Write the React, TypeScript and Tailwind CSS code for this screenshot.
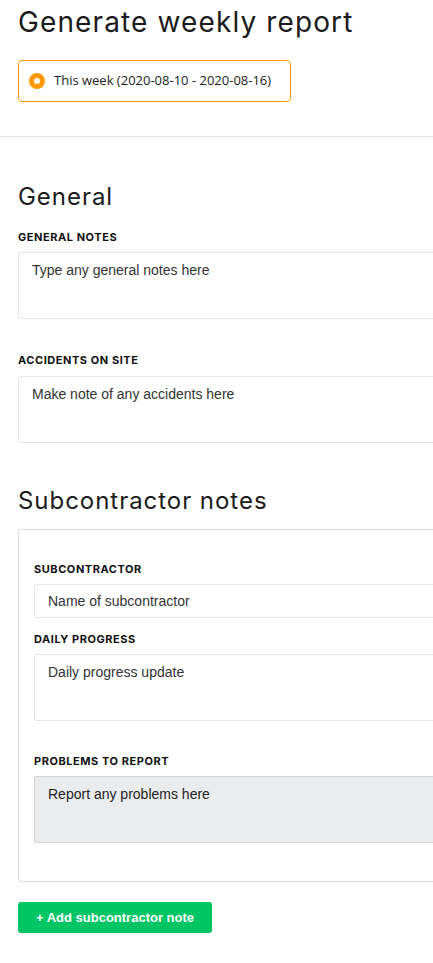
import React from 'react';

const heading = "font-['Inter',sans-serif] text-[#1b1b1b] font-normal";
const label =
  "block font-['Inter',sans-serif] text-[11px] leading-[14px] font-bold uppercase text-[#111] tracking-[0.05em]";
const field =
  "block w-[640px] rounded-[2px] border px-[13px] font-['Liberation_Sans',Arial,sans-serif] text-[14px] text-[#222] placeholder:text-[#333] outline-none resize-none";

export default function App() {
  return (
    <div className="min-h-screen w-full overflow-x-hidden bg-white">
      <div className="px-[18px] pt-[4px]">
        <h1 className={`${heading} text-[28px] leading-[36px] tracking-[0.04em]`}>Generate weekly report</h1>

        <label className="mt-[20px] flex h-[42px] w-[273px] items-center gap-[9px] rounded-[4px] border border-[#ff9900] px-[10px]">
          <span className="h-[16px] w-[16px] rounded-full border-[5px] border-[#ff9900] bg-white" />
          <span className="font-['Open_Sans',sans-serif] text-[13px] text-[#222]">This week (2020-08-10 - 2020-08-16)</span>
        </label>
      </div>

      <div className="mt-[34px] h-px w-full bg-[#e3e3e3]" />

      <div className="px-[18px] pt-[44px] pb-[30px]">
        <h2 className={`${heading} text-[24px] leading-[32px] tracking-[0.04em]`}>General</h2>

        <label className={`${label} mt-[17px] mb-[8px]`}>General notes</label>
        <textarea
          className={`${field} h-[67px] border-[#e6e6e6] bg-white py-[7px]`}
          placeholder="Type any general notes here"
        />

        <label className={`${label} mt-[34px] mb-[9px]`}>Accidents on site</label>
        <textarea
          className={`${field} h-[67px] border-[#e6e6e6] bg-white py-[7px]`}
          placeholder="Make note of any accidents here"
        />

        <h2 className={`${heading} mt-[42px] text-[24px] leading-[32px] tracking-[0.04em]`}>Subcontractor notes</h2>

        <div className="mt-[12px] w-[660px] rounded-[3px] border border-[#dcdcdc] px-[15px] pt-[32px] pb-[38px]">
          <label className={`${label} mb-[8px]`}>Subcontractor</label>
          <input
            className={`${field} h-[34px] border-[#e6e6e6] bg-white`}
            placeholder="Name of subcontractor"
          />

          <label className={`${label} mt-[14px] mb-[8px]`}>Daily progress</label>
          <textarea
            className={`${field} h-[67px] border-[#e6e6e6] bg-white py-[7px]`}
            placeholder="Daily progress update"
          />

          <label className={`${label} mt-[33px] mb-[8px]`}>Problems to report</label>
          <textarea
            className={`${field} h-[67px] border-[#d2d2d2] bg-[#ebecee] py-[7px]`}
            defaultValue="Report any problems here"
          />
        </div>

        <button className="mt-[20px] flex h-[31px] w-[194px] items-center justify-center rounded-[3px] bg-[#00c565] font-['Liberation_Sans',Arial,sans-serif] text-[13px] font-bold text-white">
          + Add subcontractor note
        </button>
      </div>
    </div>
  );
}
